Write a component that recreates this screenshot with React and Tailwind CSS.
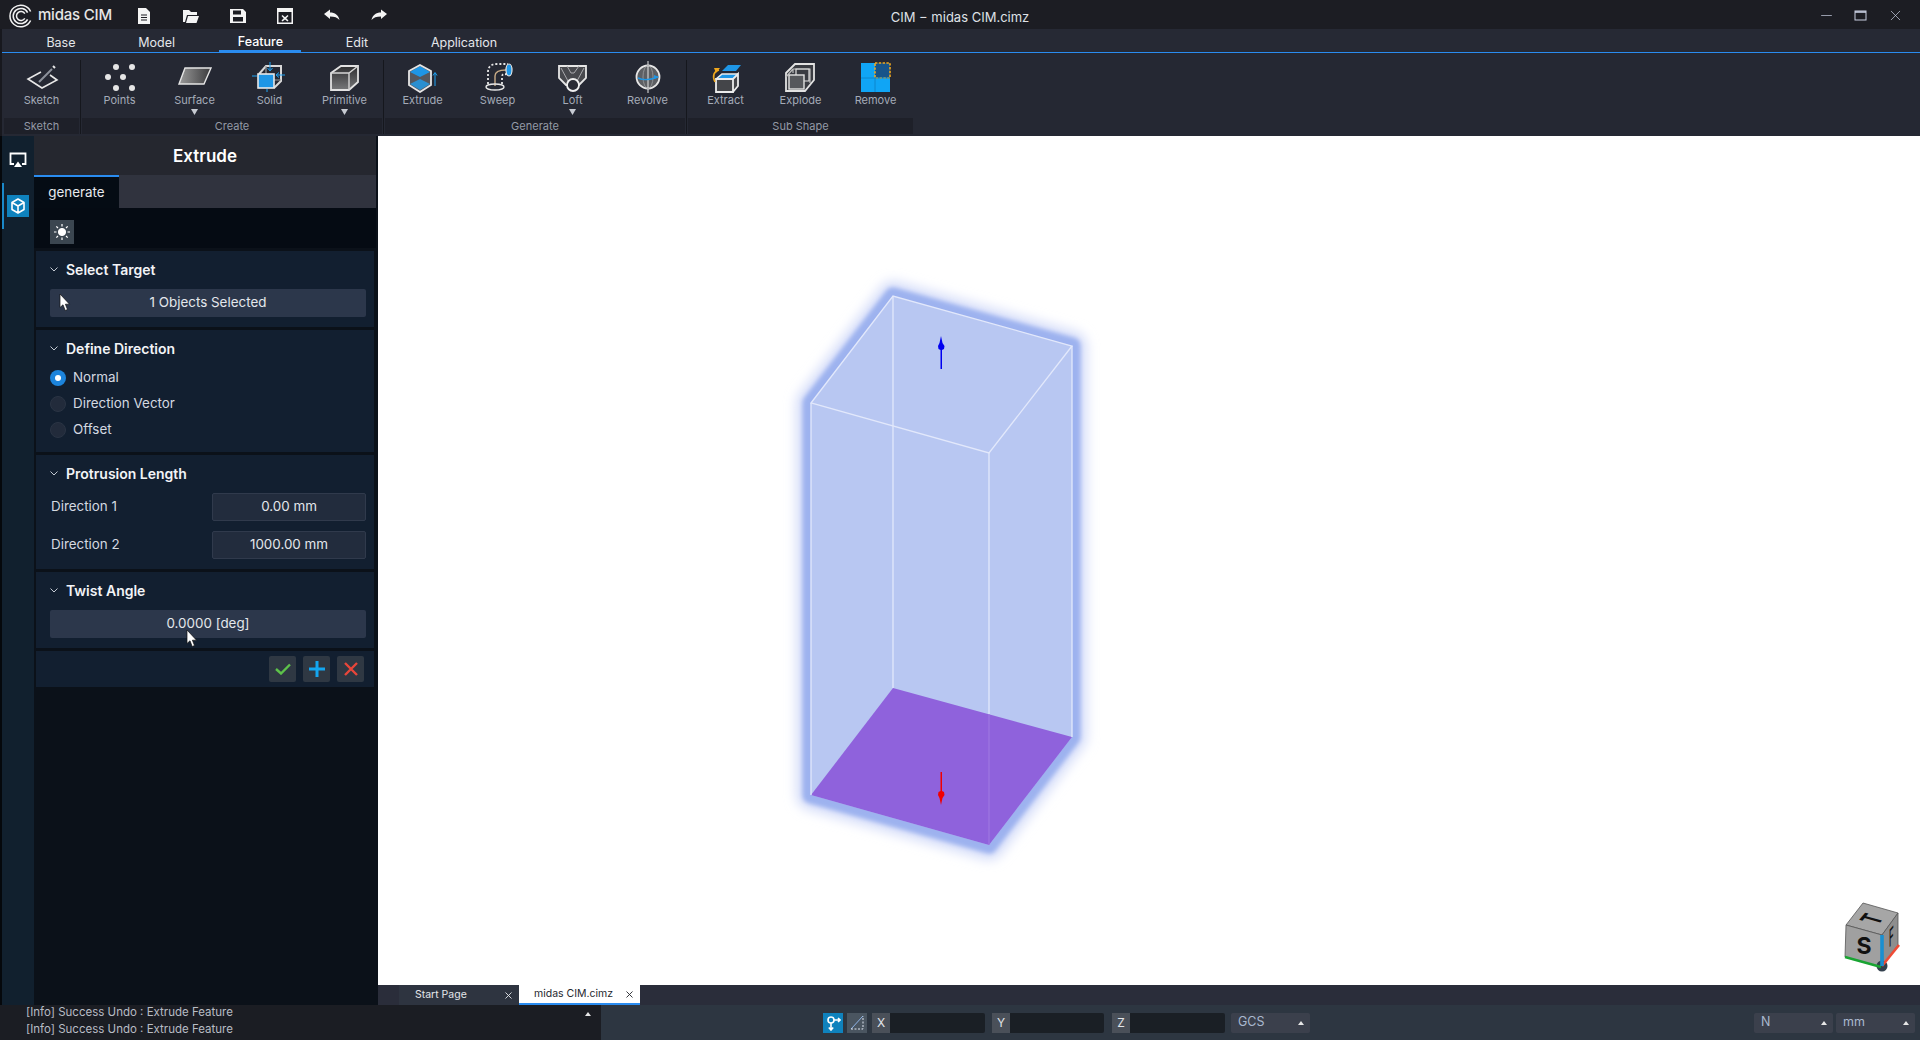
import { X, Minus } from 'lucide-react'

const TABS = ['Base', 'Model', 'Feature', 'Edit', 'Application']

function MidasLogo() {
  return (
    <svg width="24" height="24" viewBox="0 0 24 24" fill="none" stroke="#f2f2f2" strokeWidth="1.5">
      <path d="M21.6 7.5A10.8 10.8 0 1 0 21.6 16.5" />
      <path d="M18.6 8.6A7.6 7.6 0 1 0 18.6 15.4" />
      <path d="M15.8 9.6A4.5 4.5 0 1 0 15.8 14.4" />
    </svg>
  )
}

function SketchIcon() {
  return (
    <svg width="36" height="32" viewBox="0 0 36 32" fill="none">
      <path d="M17 11L4 18L18 27L33 19L26 14" stroke="#e8e8e8" strokeWidth="1.6" />
      <path d="M15 21L28 8" stroke="#8d929c" strokeWidth="2" />
      <path d="M29 5l2 2" stroke="#e8e8e8" strokeWidth="2" />
    </svg>
  )
}

function PointsIcon() {
  const dots = [[14, 6], [30, 6], [6, 16], [21, 16], [14, 27], [30, 27]]
  return (
    <svg width="36" height="32" viewBox="0 0 36 32" fill="#e6e6e6">
      {dots.map(([x, y]) => <circle key={`${x}-${y}`} cx={x} cy={y} r="3" />)}
    </svg>
  )
}

function SurfaceIcon() {
  return (
    <svg width="36" height="32" viewBox="0 0 36 32">
      <defs>
        <linearGradient id="surf" x1="0" y1="0" x2="1" y2="0">
          <stop offset="0" stopColor="#9a9a9a" />
          <stop offset="1" stopColor="#3a3a3c" />
        </linearGradient>
      </defs>
      <path d="M2 23L8 7H34L27 23Z" fill="url(#surf)" stroke="#e5e5e5" strokeWidth="1.4" />
    </svg>
  )
}

function SolidIcon() {
  return (
    <svg width="36" height="32" viewBox="0 0 36 32" fill="none">
      <path d="M7 13L14 5H29V20L22 27" stroke="#d8d8d8" strokeWidth="2" />
      <path d="M14 5V19H29M14 19L7 27" stroke="#9a9a9a" strokeWidth="1.2" />
      <rect x="6" y="13" width="16" height="14" fill="#1e96e6" stroke="#e8e8e8" strokeWidth="1.6" />
      <path d="M18 1V9M15.5 7L18 10L20.5 7M33 14H25M27 11.5L24 14L27 16.5M0 15H5M15 28V31" stroke="#1ea3f5" strokeWidth="1" />
    </svg>
  )
}

function PrimitiveIcon() {
  return (
    <svg width="36" height="32" viewBox="0 0 36 32">
      <defs>
        <linearGradient id="prim" x1="0" y1="0" x2="0" y2="1">
          <stop offset="0" stopColor="#2e2e30" />
          <stop offset="1" stopColor="#77787a" />
        </linearGradient>
      </defs>
      <path d="M4 12L14 5H31V21L22 29H4Z" fill="url(#prim)" stroke="#e2e2e2" strokeWidth="1.8" />
      <path d="M4 12H22L31 5M22 12V29" fill="none" stroke="#d5d5d5" strokeWidth="1.4" />
    </svg>
  )
}

function ExtrudeIcon() {
  return (
    <svg width="36" height="32" viewBox="0 0 36 32">
      <path d="M15 4L26 10V24L15 31L4 24V10Z" fill="#55585f" />
      <path d="M15 5L25 11L15 16L5 11Z" fill="#1e96e6" />
      <path d="M5 23L15 18L25 23L15 29Z" fill="#2a8fd0" />
      <path d="M15 4L26 10V24L15 31L4 24V10Z" fill="none" stroke="#e6e6e6" strokeWidth="1.8" />
      <path d="M30 25V12M28 14.5L30 11.5L32 14.5" fill="none" stroke="#1ea3f5" strokeWidth="1" />
    </svg>
  )
}

function SweepIcon() {
  return (
    <svg width="36" height="32" viewBox="0 0 36 32" fill="none">
      <path d="M8 23V11C8 6 11 3 17 3H28" stroke="#e6e6e6" strokeWidth="1.8" strokeDasharray="2 2" />
      <path d="M22 23V16C22 13 24 12 28 14" stroke="#e6e6e6" strokeWidth="1.8" strokeDasharray="2 2" />
      <path d="M15 25V15C15 11 18 9 26 9" stroke="#c8ab86" strokeWidth="1.4" />
      <ellipse cx="29" cy="9" rx="3" ry="6" fill="#1e96e6" stroke="#e6e6e6" strokeWidth="1.2" />
      <ellipse cx="15" cy="26" rx="9" ry="3" stroke="#e6e6e6" strokeWidth="1.4" />
    </svg>
  )
}

function LoftIcon() {
  return (
    <svg width="36" height="32" viewBox="0 0 36 32" fill="none">
      <path d="M4 5H31V17L24 24H11L4 17Z" fill="#48494e" stroke="#e6e6e6" strokeWidth="1.8" />
      <path d="M12 5L16 12H19L24 5M6 7L13 20M29 7L22 20" stroke="#a9a9ad" strokeWidth="1" />
      <circle cx="18" cy="24" r="6" fill="#2a2c35" stroke="#f0f0f0" strokeWidth="1.8" />
    </svg>
  )
}

function RevolveIcon() {
  return (
    <svg width="36" height="32" viewBox="0 0 36 32" fill="none">
      <circle cx="18" cy="16" r="11.5" fill="#5d5f63" stroke="#e6e6e6" strokeWidth="1.8" />
      <path d="M18 0V32" stroke="#e6e6e6" strokeWidth="1" />
      <ellipse cx="18" cy="16" rx="5" ry="11.5" stroke="#9c9da0" strokeWidth="0.8" />
      <path d="M8 17C12 19 20 19 28 16" stroke="#1e96e6" strokeWidth="1.4" />
      <path d="M24 14L29 16L24 18Z" fill="#1e96e6" />
    </svg>
  )
}

function ExtractIcon() {
  return (
    <svg width="36" height="32" viewBox="0 0 36 32" fill="none">
      <path d="M14 10L20 4H33L28 10Z" fill="#1e96e6" />
      <path d="M8 18L14 13H30L25 18Z" fill="#1e96e6" />
      <path d="M8 18H25V31H8ZM25 18L30 13V25L25 31" fill="#444549" stroke="#ececec" strokeWidth="1.8" />
      <path d="M8 18L14 13H30" stroke="#ececec" strokeWidth="1.6" />
      <path d="M11 9C6 10 4 15 7 21" stroke="#f0a81e" strokeWidth="1.6" />
      <path d="M6 7L12 7L8 12Z" fill="#f0a81e" />
    </svg>
  )
}

function ExplodeIcon() {
  return (
    <svg width="36" height="32" viewBox="0 0 36 32" fill="none" stroke="#e2e2e2">
      <path d="M3 12L12 3H31V19L22 30H3Z" fill="#3a3c42" strokeWidth="1.8" />
      <path d="M10 8H27V22M10 8L3 16M10 8V12" strokeWidth="1.2" stroke="#bcbcbc" />
      <rect x="6" y="14" width="15" height="14" fill="#56585c" strokeWidth="1.4" />
      <path d="M13 14V8H26V20H21" strokeWidth="1.2" />
    </svg>
  )
}

function RemoveIcon() {
  return (
    <svg width="36" height="32" viewBox="0 0 36 32">
      <rect x="3" y="2" width="29" height="29" fill="#10a5f5" />
      <rect x="17" y="2" width="15" height="15" fill="#17548a" stroke="#f0a81e" strokeWidth="1.6" strokeDasharray="2.4 1.4" />
      <path d="M3 17H17M17 17V31M17 17H32" stroke="#0c86cc" strokeWidth="1" />
    </svg>
  )
}

const GROUPS = [
  { label: 'Sketch', items: [{ name: 'Sketch', Icon: SketchIcon }] },
  {
    label: 'Create',
    items: [
      { name: 'Points', Icon: PointsIcon },
      { name: 'Surface', Icon: SurfaceIcon, more: true },
      { name: 'Solid', Icon: SolidIcon },
      { name: 'Primitive', Icon: PrimitiveIcon, more: true },
    ],
  },
  {
    label: 'Generate',
    items: [
      { name: 'Extrude', Icon: ExtrudeIcon },
      { name: 'Sweep', Icon: SweepIcon },
      { name: 'Loft', Icon: LoftIcon, more: true },
      { name: 'Revolve', Icon: RevolveIcon },
    ],
  },
  {
    label: 'Sub Shape',
    items: [
      { name: 'Extract', Icon: ExtractIcon },
      { name: 'Explode', Icon: ExplodeIcon },
      { name: 'Remove', Icon: RemoveIcon },
    ],
  },
]

function FileIcons() {
  return (
    <div className="flex items-center gap-[31px] ml-[24px]">
      <svg width="16" height="16" viewBox="0 0 16 16" fill="#f4f4f4">
        <path fillRule="evenodd" d="M2 0H10L14 4V16H2ZM5 6.5V7.5H11V6.5ZM5 9V10H11V9ZM5 11.5V12.5H11V11.5Z" />
      </svg>
      <svg width="16" height="16" viewBox="0 0 16 16" fill="#f4f4f4">
        <path d="M0 2H6L8 4H14V7H4L2 14H0ZM5 8H16L13.5 15H3Z" />
      </svg>
      <svg width="16" height="16" viewBox="0 0 16 16" fill="#f4f4f4">
        <path fillRule="evenodd" d="M0 1H13L16 4V15H0ZM3 2.5V6.5H11V2.5ZM3 9V13.5H13V9Z" />
      </svg>
      <svg width="16" height="16" viewBox="0 0 16 16" fill="#f4f4f4">
        <path fillRule="evenodd" d="M0 0H16V16H0ZM1.5 4V14.5H14.5V4ZM5.5 7L8 9.2L10.5 7L11.5 8L9.2 10.3L11.5 12.6L10.5 13.6L8 11.4L5.5 13.6L4.5 12.6L6.8 10.3L4.5 8Z" />
      </svg>
      <svg width="16" height="16" viewBox="0 0 16 16" fill="#f4f4f4">
        <path d="M0 6L6 1.5V4.5C11 4.5 14.5 7 15.5 12C13.5 9.5 10.5 8.4 6 8.4V11Z" />
      </svg>
      <svg width="16" height="16" viewBox="0 0 16 16" fill="#f4f4f4">
        <path d="M16 6L10 1.5V4.5C5 4.5 1.5 7 .5 12C2.5 9.5 5.5 8.4 10 8.4V11Z" />
      </svg>
    </div>
  )
}

function TitleBar() {
  return (
    <div className="relative flex h-[29px] shrink-0 items-center bg-[#1c1d23] pl-[9px] pt-[2px]">
      <MidasLogo />
      <span className="ml-[5px] text-[15px] font-medium tracking-[-0.2px] text-[#e6e6e6]">midas CIM</span>
      <FileIcons />
      <span className="absolute left-0 right-0 top-[9px] text-center text-[13px] leading-4 text-[#dfe1e6]">
        CIM − midas CIM.cimz
      </span>
      <div className="ml-auto flex items-center gap-[19px] pr-[16px] text-[#c9d0e2]">
        <Minus size={17} strokeWidth={1} />
        <svg width="14" height="12" viewBox="0 0 14 12" fill="none" stroke="#c9d0e2">
          <rect x="1" y="1" width="11" height="9" strokeWidth="1" />
          <path d="M1 2H12" strokeWidth="1.6" />
        </svg>
        <X size={17} strokeWidth={1} />
      </div>
    </div>
  )
}

function MenuTabs() {
  return (
    <div className="ml-[2px] flex h-[24px] shrink-0 border-b border-[#2a8cf0] bg-[#262934] pl-[13px] text-[12.5px]">
      {TABS.map((tab) => (
        <div
          key={tab}
          className={
            tab === 'Feature'
              ? 'mx-[13px] flex items-center border-b-2 border-[#2a8cf0] px-[18.4px] pt-[5px] font-medium text-white'
              : 'mx-[13px] flex items-center px-[18.4px] pt-[5px] text-[#e4e6ea]'
          }
        >
          {tab}
        </div>
      ))}
    </div>
  )
}

function Ribbon() {
  return (
    <div className="ml-[2px] flex h-[83px] shrink-0 items-end bg-[#252833] pl-[2px]">
      {GROUPS.map((group, i) => (
        <div key={group.label} className="flex h-full items-end">
          {i > 0 && <div className="mx-px mb-[2px] h-[74px] w-px bg-[#15171d]" />}
          <div className="flex flex-col">
            <div className="flex">
              {group.items.map(({ name, Icon, more }) => (
                <div key={name} className="flex h-[65px] w-[75px] flex-col items-center pt-[8px]">
                  <Icon />
                  <span className="h-[14px] text-[11px] leading-[14px] text-[#a4abb8]">{name}</span>
                  {more && (
                    <svg className="mt-[2px]" width="7" height="6" viewBox="0 0 7 6" fill="#c6cad2">
                      <path d="M0 0H7L3.5 6Z" />
                    </svg>
                  )}
                </div>
              ))}
            </div>
            <div className="mb-[2px] flex h-[16px] items-center justify-center bg-[#1e2029] text-[11px] text-[#949aa6]">
              {group.label}
            </div>
          </div>
        </div>
      ))}
    </div>
  )
}

function NavRail() {
  return (
    <div className="ml-[2px] flex w-[32px] shrink-0 flex-col bg-[#11202e]">
      <div className="flex h-[47px] items-center justify-center">
        <svg width="18" height="16" viewBox="0 0 18 16" fill="none">
          <path d="M5 12H1.5V1.5H16.5V12H13" stroke="#fff" strokeWidth="1.8" />
          <path d="M9 9.5L13 15H5Z" fill="#fff" />
        </svg>
      </div>
      <div className="flex h-[46px] items-center justify-start border-l-2 border-[#1a88c9] pl-[3px]">
        <div className="flex h-[22px] w-[22px] items-center justify-center bg-[#0f82bd]">
          <svg width="16" height="16" viewBox="0 0 16 16" fill="none" stroke="#fff" strokeWidth="1.6" strokeLinejoin="round">
            <path d="M8 1L14 4.5V11.5L8 15L2 11.5V4.5ZM2 4.5L8 8L14 4.5M8 8V15" />
          </svg>
        </div>
      </div>
    </div>
  )
}

function SectionTitle({ children }) {
  return (
    <div className="flex h-[38px] items-center pb-[2px]">
      <svg width="8" height="5" viewBox="0 0 8 5" fill="none" stroke="#c3c9d2" strokeWidth="1">
        <path d="M.5 .5L4 4L7.5 .5" />
      </svg>
      <span className="ml-[8px] text-[14px] font-semibold text-[#f2f4f7]">{children}</span>
    </div>
  )
}

function Section({ title, children }) {
  return (
    <section className="bg-[#121f30] pl-[14px] pr-[8px] pb-[10px]">
      <SectionTitle>{title}</SectionTitle>
      {children}
    </section>
  )
}

function Radio({ label, checked }) {
  return (
    <div className="flex h-[20px] items-center gap-[7px]">
      {checked ? (
        <span className="flex h-[16px] w-[16px] items-center justify-center rounded-full bg-[#1c84dc]">
          <span className="h-[6px] w-[6px] rounded-full bg-white" />
        </span>
      ) : (
        <span className="h-[16px] w-[16px] rounded-full border border-[#2a3444] bg-[#222b3b]" />
      )}
      <span className="pb-px text-[13.4px] text-[#d4d9e0]">{label}</span>
    </div>
  )
}

function Arrow({ className, width = 12, height = 18 }) {
  return (
    <svg className={className} width={width} height={height} viewBox="0 0 12 18">
      <path d="M1 0V13.5L4 10.8L6.2 16.5L8.5 15.5L6.4 10.2H10.5Z" fill="#fff" stroke="#111" strokeWidth="0.7" />
    </svg>
  )
}

function PanelField({ children }) {
  return (
    <div className="relative flex h-[28px] items-center justify-center rounded-[2px] bg-[#2c374b] pb-[2px] text-[13.4px] text-[#e4e7ec]">
      {children}
    </div>
  )
}

function LengthRow({ label, value }) {
  return (
    <div className="flex h-[28px] items-center justify-between">
      <span className="pb-[2px] pl-px text-[13.4px] text-[#d4d9e0]">{label}</span>
      <div className="flex h-[28px] w-[154px] items-center justify-center whitespace-pre rounded-[2px] border border-[#303a4c] bg-[#222c3d] pb-[2px] text-[13.4px] text-[#e4e7ec]">
        {value}
      </div>
    </div>
  )
}

function ActionButton({ children }) {
  return <button className="flex h-[26px] w-[27px] items-center justify-center rounded-[2px] bg-[#2f3843]">{children}</button>
}

function ExtrudePanel() {
  return (
    <aside className="flex w-[344px] shrink-0 flex-col bg-[#0b1119] pr-[2px]">
      <div className="flex h-[39px] shrink-0 items-center justify-center bg-[#25272f] pt-[2px] text-[17px] font-semibold text-white">
        Extrude
      </div>
      <div className="flex h-[33px] shrink-0 bg-[#30333e]">
        <div className="flex w-[85px] items-center justify-center border-t-2 border-[#2a8cf0] bg-[#050c14] text-[13.4px] text-[#e8eaee]">
          generate
        </div>
      </div>
      <div className="flex h-[40px] shrink-0 items-start bg-[#050b13] pl-[16px] pt-[12px]">
        <div className="flex h-[24px] w-[24px] items-center justify-center bg-[#3b4650]">
          <svg width="16" height="16" viewBox="0 0 16 16" fill="#fff" stroke="#fff">
            <circle cx="8" cy="8" r="3.6" />
            <path d="M8 0V2.5M8 13.5V16M0 8H2.5M13.5 8H16M2.3 2.3L4 4M12 12L13.7 13.7M2.3 13.7L4 12M12 4L13.7 2.3" strokeWidth="1.2" />
          </svg>
        </div>
      </div>
      <div className="mx-[2px] mt-[3px] flex flex-col gap-[3px]">
        <Section title="Select Target">
          <PanelField>
            <Arrow className="absolute left-[9px] top-[5px]" />
            1 Objects Selected
          </PanelField>
        </Section>
        <section className="bg-[#121f30] pl-[14px] pb-[12px]">
          <SectionTitle>Define Direction</SectionTitle>
          <div className="flex flex-col gap-[6px]">
            <Radio label="Normal" checked />
            <Radio label="Direction Vector" />
            <Radio label="Offset" />
          </div>
        </section>
        <Section title="Protrusion Length">
          <div className="flex flex-col gap-[10px]">
            <LengthRow label="Direction 1" value="0.00 mm" />
            <LengthRow label="Direction 2" value="1000.00 mm" />
          </div>
        </Section>
        <Section title="Twist Angle">
          <PanelField>
            0.0000 [deg]
            <Arrow className="absolute left-[136px] top-[20px]" />
          </PanelField>
        </Section>
        <div className="flex h-[36px] items-center justify-end gap-[7px] bg-[#121f30] pr-[10px]">
          <ActionButton>
            <svg width="16" height="12" viewBox="0 0 16 12" fill="none" stroke="#5dc24a" strokeWidth="2.4">
              <path d="M1 6L6 10.5L15 1.5" />
            </svg>
          </ActionButton>
          <ActionButton>
            <svg width="16" height="16" viewBox="0 0 16 16" fill="none" stroke="#14a6f0" strokeWidth="3">
              <path d="M8 0V16M0 8H16" />
            </svg>
          </ActionButton>
          <ActionButton>
            <svg width="14" height="14" viewBox="0 0 14 14" fill="none" stroke="#e8463a" strokeWidth="2.4">
              <path d="M1 1L13 13M13 1L1 13" />
            </svg>
          </ActionButton>
        </div>
      </div>
    </aside>
  )
}

function Viewport() {
  const hull = '811,403 893,296 1072,346 1072,737 989,845 811,795'
  return (
    <svg className="block min-h-0 w-full flex-1 bg-white" viewBox="378 136 1542 849" preserveAspectRatio="none">
      <defs>
        <filter id="glowOuter" x="-30%" y="-30%" width="160%" height="160%">
          <feGaussianBlur stdDeviation="6" />
        </filter>
        <filter id="glowInner" x="-30%" y="-30%" width="160%" height="160%">
          <feGaussianBlur stdDeviation="2.2" />
        </filter>
      </defs>

      <polygon points={hull} fill="#d5ddf9" stroke="#d5ddf9" strokeWidth="30" strokeLinejoin="round" filter="url(#glowOuter)" />
      <polygon points={hull} fill="#9db2ef" stroke="#9db2ef" strokeWidth="17" strokeLinejoin="round" filter="url(#glowInner)" />
      <polygon points={hull} fill="#b8c7f2" />
      <polygon points="893,688 1072,737 989,845 811,795" fill="#8f62dc" />

      <g fill="none" stroke="#e2e8fb" strokeWidth="1.3">
        <path d="M811 403L893 296L1072 346L989 453Z" />
        <path d="M811 403V795M1072 346V737M989 453V714M893 296V688" />
      </g>
      <path d="M989 714V845" stroke="#a07be2" strokeWidth="1" />

      <path d="M941 336L942.5 343L944.5 346L944 349L942 350V369H940.5V350L938.5 349L938 346L939.5 343Z" fill="#0000f0" />
      <path d="M941 805L942.5 798L944.5 795L944 792L942 791V772H940.5V791L938.5 792L938 795L939.5 798Z" fill="#f00000" />

      {/* view cube */}
      <polygon points="1863,903 1898,913 1882,935 1846,925" fill="#a6a6a6" stroke="#555" strokeWidth="0.8" />
      <polygon points="1846,925 1882,935 1881,967 1845,957" fill="#a0a0a0" stroke="#555" strokeWidth="0.8" />
      <polygon points="1882,935 1898,913 1898,945 1883,965" fill="#8e8e8e" stroke="#555" strokeWidth="0.8" />
      <circle cx="1882" cy="966" r="5.5" fill="#33404d" />
      <path d="M1845 957L1881 967" stroke="#19a432" strokeWidth="2.4" />
      <path d="M1882 966L1899 945" stroke="#ef4b35" strokeWidth="2.6" />
      <path d="M1882 935V966" stroke="#1a8fd0" strokeWidth="3.6" />
      <text x="1864" y="954" textAnchor="middle" fontFamily="Inter, sans-serif" fontSize="23" fontWeight="700" fill="#111">S</text>
      <text transform="matrix(.5 -.6 1.3 .36 1881 921.5)" textAnchor="middle" fontFamily="Inter, sans-serif" fontSize="20" fontWeight="700" fill="#111">T</text>
      <text transform="matrix(.4 -.5 0 1.2 1889 948)" fontFamily="Inter, sans-serif" fontSize="20" fontWeight="500" fill="#111">F</text>
    </svg>
  )
}

function DocTabs() {
  return (
    <div className="flex h-[20px] shrink-0 bg-[#2a2d3a] pl-[21px] text-[10.5px]">
      <div className="flex w-[120px] items-center justify-between bg-[#2e3440] pl-[16px] pr-[5px] text-[#e4e6ea]">
        Start Page
        <X size={11} />
      </div>
      <div className="flex w-[121px] items-center justify-between border-b-2 border-[#2a8cf0] bg-white pl-[15px] pr-[5px] text-[#25272e]">
        midas CIM.cimz
        <X size={11} />
      </div>
    </div>
  )
}

function CoordField({ axis, className }) {
  return (
    <div className={`flex h-[20px] ${className}`}>
      <div className="flex w-[18px] items-center justify-center bg-[#4a5059] text-[12px] text-[#e2e5ea]">{axis}</div>
      <div className="flex-1 rounded-r-[2px] bg-[#1a1f25]" />
    </div>
  )
}

function Combo({ label, width }) {
  return (
    <div className={`flex h-[20px] items-center justify-between rounded-[2px] bg-[#3b404c] pl-[7px] pr-[6px] text-[12.5px] text-[#a9b8cf] ${width}`}>
      {label}
      <svg width="6" height="4" viewBox="0 0 6 4" fill="#e6e6e6">
        <path d="M3 0L6 4H0Z" />
      </svg>
    </div>
  )
}

function StatusBar() {
  return (
    <div className="flex h-[35px] shrink-0 items-center bg-[#2d3641]">
      <div className="relative flex h-full w-[601px] flex-col justify-center bg-[#1b1d23] pb-[3px] pl-[26px] text-[11.5px] leading-[17px] text-[#b8bcc4]">
        <div>[Info] Success Undo : Extrude Feature</div>
        <div>[Info] Success Undo : Extrude Feature</div>
        <svg className="absolute left-[585px] top-[7px]" width="6" height="4" viewBox="0 0 6 4" fill="#e6e6e6">
          <path d="M3 0L6 4H0Z" />
        </svg>
      </div>
      <div className="ml-[222px] flex items-center">
        <div className="flex h-[20px] w-[20px] items-center justify-center bg-[#0f82bd]">
          <svg width="15" height="16" viewBox="0 0 15 16" fill="none" stroke="#fff" strokeWidth="1.6">
            <circle cx="5" cy="5" r="3" />
            <path d="M5 8V15M2.8 12.5L5 15L7.2 12.5M8 5H14M12 3L14.2 5L12 7" />
          </svg>
        </div>
        <div className="ml-[4px] flex h-[20px] w-[20px] items-center justify-center bg-[#4a5560]">
          <svg width="15" height="15" viewBox="0 0 15 15" fill="none" stroke="#8fb4e8" strokeWidth="1">
            <path d="M1 14L13 1" />
            <path d="M1 14H13V1" strokeDasharray="2 1.5" stroke="#dfe6f0" />
          </svg>
        </div>
        <CoordField axis="X" className="ml-[5px] w-[113px]" />
        <CoordField axis="Y" className="ml-[7px] w-[112px]" />
        <CoordField axis="Z" className="ml-[8px] w-[113px]" />
        <div className="ml-[6px]">
          <Combo label="GCS" width="w-[79px]" />
        </div>
      </div>
      <div className="ml-auto flex gap-[3px] pr-[5px]">
        <Combo label="N" width="w-[79px]" />
        <Combo label="mm" width="w-[79px]" />
      </div>
    </div>
  )
}

export default function App() {
  return (
    <div className="flex h-[1040px] w-[1920px] flex-col overflow-hidden bg-[#17181e] font-[Inter,sans-serif]">
      <TitleBar />
      <MenuTabs />
      <Ribbon />
      <div className="flex min-h-0 flex-1 bg-[#05080c]">
        <NavRail />
        <ExtrudePanel />
        <div className="flex min-w-0 flex-1 flex-col">
          <Viewport />
          <DocTabs />
        </div>
      </div>
      <StatusBar />
    </div>
  )
}
